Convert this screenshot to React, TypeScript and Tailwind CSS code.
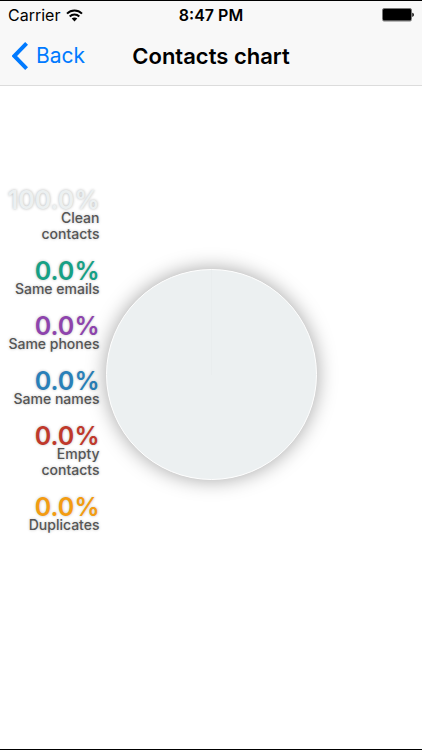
import React from "react";

interface LegendProps {
  value: number;
  label: string;
  color: string;
}

const items: LegendProps[] = [
  {
    value: 100,
    label: "Clean contacts",
    color: "text-[#ecf0f1] [text-shadow:0_0_3px_rgba(0,0,0,0.3)]",
  },
  { value: 0, label: "Same emails", color: "text-[#16a085]" },
  { value: 0, label: "Same phones", color: "text-[#8e44ad]" },
  { value: 0, label: "Same names", color: "text-[#2980b9]" },
  { value: 0, label: "Empty contacts", color: "text-[#c0392b]" },
  { value: 0, label: "Duplicates", color: "text-[#f39c12]" },
];

function WifiIcon() {
  return (
    <svg viewBox="0 0 17 13" className="w-[17px] h-[13px]" aria-hidden="true">
      <g fill="none" stroke="#000" strokeWidth="2">
        <path d="M1 4.6C5.2 0.4 11.8 0.4 16 4.6" />
        <path d="M3.7 7.5C6.4 4.8 10.6 4.8 13.3 7.5" />
      </g>
      <path d="M5.7 9.6C7.3 8.1 9.7 8.1 11.3 9.6L8.5 12.5Z" />
    </svg>
  );
}

function BatteryIcon() {
  return (
    <svg viewBox="0 0 32 14" className="w-8 h-[14px]" aria-hidden="true">
      <rect x="0.5" y="0.5" width="29" height="12.5" rx="1.5" fill="none" stroke="#777" />
      <rect x="1" y="1" width="28" height="11.5" rx="1" />
      <path d="M30.3 4.7C32.4 5 32.4 8.6 30.3 8.9Z" />
    </svg>
  );
}

function StatusBar() {
  return (
    <div className="grid grid-cols-[1fr_auto_1fr] items-center h-7 px-2">
      <div className="flex items-center gap-1.5">
        <span className="text-base">Carrier</span>
        <WifiIcon />
      </div>
      <span className="text-base font-semibold text-center">8:47 PM</span>
      <div className="flex justify-end">
        <BatteryIcon />
      </div>
    </div>
  );
}

function NavBar() {
  return (
    <div className="grid grid-cols-[1fr_auto_1fr] items-center h-14 px-3 pb-0.5">
      <button className="flex items-center gap-2 text-[21px] text-[#007aff]">
        <svg viewBox="0 0 16 28" className="w-4 h-7" aria-hidden="true">
          <path d="M14.6 1.4L2.2 14L14.6 26.6" fill="none" stroke="#007aff" strokeWidth="4" />
        </svg>
        Back
      </button>
      <h1 className="text-[22px] font-semibold">Contacts chart</h1>
    </div>
  );
}

function LegendItem({ value, label, color }: LegendProps) {
  return (
    <li className="flex flex-col items-end text-right [text-shadow:0_0_3px_rgba(0,0,0,0.25)]">
      <span className={"text-[25px] leading-5 font-semibold " + color}>
        {value.toFixed(1)}%
      </span>
      <span className="text-sm leading-4 font-medium text-[#555]">
        {label}
      </span>
    </li>
  );
}

function Pie() {
  return (
    <div className="flex justify-center aspect-square rounded-full border border-white bg-[#ecf0f1] shadow-[0_0_20px_rgba(0,0,0,0.36)]">
      <div className="w-px h-1/2 bg-[#e9edee]"></div>
    </div>
  );
}

export default function App() {
  return (
    <div className="flex flex-col min-h-screen border-y border-black bg-white text-black font-['Inter','Liberation_Sans',sans-serif]">
      <header className="border-b border-[#dcdcdc] bg-[#f8f8f8]">
        <StatusBar />
        <NavBar />
      </header>
      <main className="grid grid-cols-[minmax(0,1fr)_50%_minmax(0,1fr)] items-start pt-[104px]">
        <ul className="flex flex-col gap-[19px] pl-1 pr-[6px]">
          {items.map((item) => (
            <LegendItem key={item.label} {...item} />
          ))}
        </ul>
        <div className="pt-[79px]">
          <Pie />
        </div>
      </main>
    </div>
  );
}
